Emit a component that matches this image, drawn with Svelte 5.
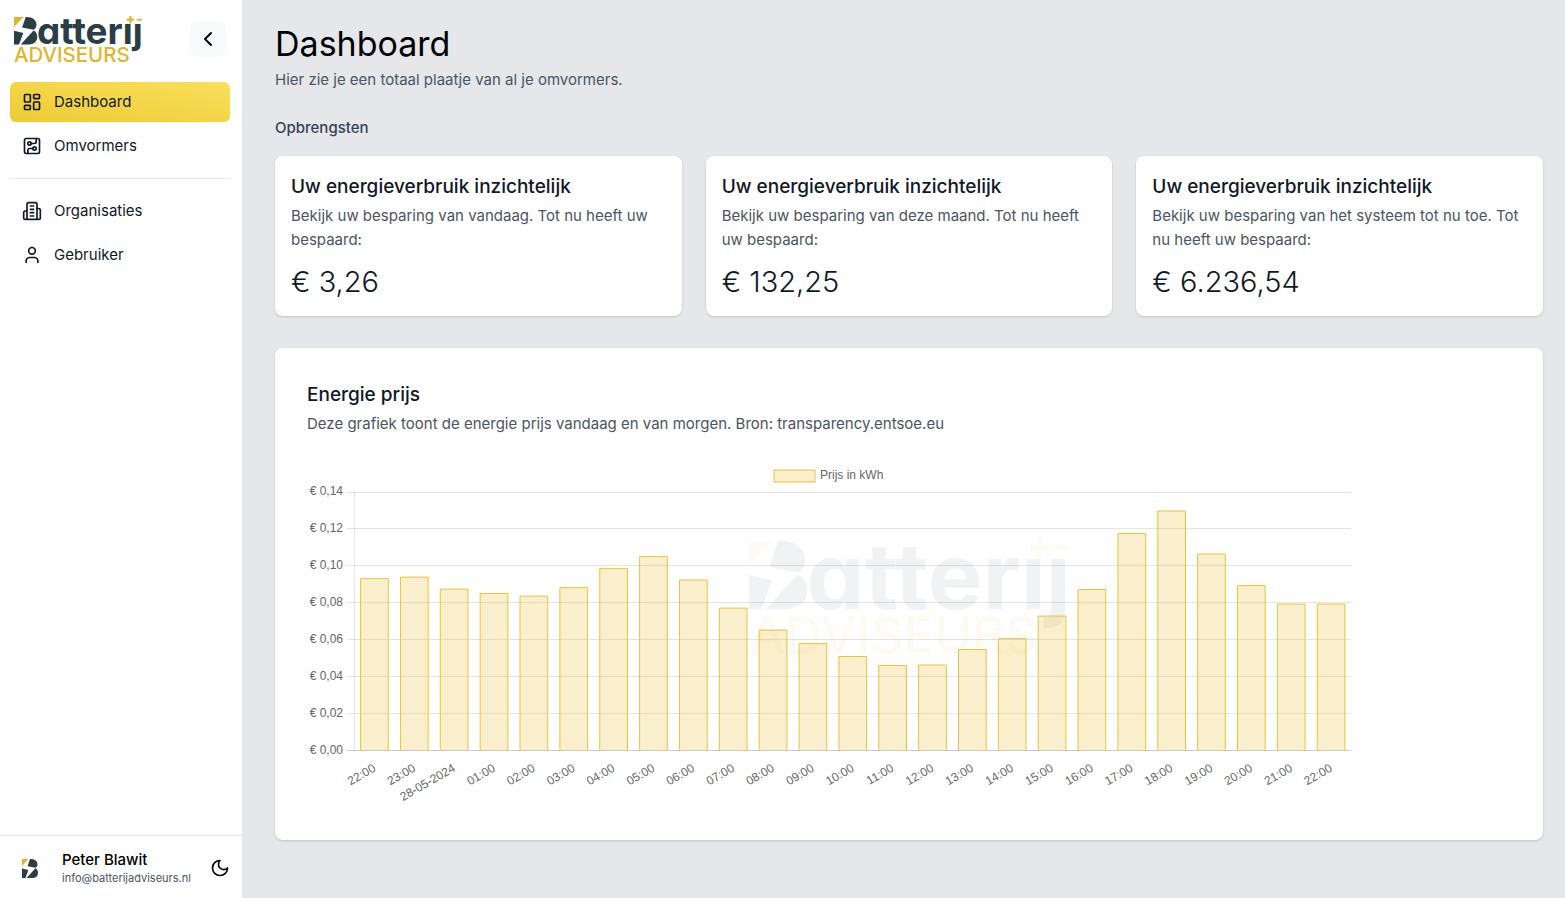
<script>
  const mainLinks = [
    { label: "Dashboard", icon: "dashboard", active: true },
    { label: "Omvormers", icon: "circuit" },
  ];

  const adminLinks = [
    { label: "Organisaties", icon: "building" },
    { label: "Gebruiker", icon: "user" },
  ];

  const savings = [
    { period: "Bekijk uw besparing van vandaag. Tot nu heeft uw bespaard:", amount: "€ 3,26" },
    { period: "Bekijk uw besparing van deze maand. Tot nu heeft uw bespaard:", amount: "€ 132,25" },
    { period: "Bekijk uw besparing van het systeem tot nu toe. Tot nu heeft uw bespaard:", amount: "€ 6.236,54" },
  ];

  const prices = [
    ["22:00", 0.0931], ["23:00", 0.0939], ["28-05-2024", 0.0874], ["01:00", 0.085],
    ["02:00", 0.0836], ["03:00", 0.0882], ["04:00", 0.0985], ["05:00", 0.105],
    ["06:00", 0.0923], ["07:00", 0.0771], ["08:00", 0.0652], ["09:00", 0.0579],
    ["10:00", 0.0509], ["11:00", 0.046], ["12:00", 0.0463], ["13:00", 0.0547],
    ["14:00", 0.0606], ["15:00", 0.0728], ["16:00", 0.0872], ["17:00", 0.1175],
    ["18:00", 0.1297], ["19:00", 0.1064], ["20:00", 0.0893], ["21:00", 0.0793],
    ["22:00", 0.0793],
  ];

  // Plot area inside the chart's viewBox
  const plot = { left: 47.5, right: 1044, top: 32, bottom: 290.5 };
  const maxPrice = 0.14;
  const slot = (plot.right - plot.left) / prices.length;
  const barWidth = slot * 0.72 - 1;

  const ticks = [0, 0.02, 0.04, 0.06, 0.08, 0.1, 0.12, 0.14].map((value) => ({
    label: "€ " + value.toFixed(2).replace(".", ","),
    y: Math.floor(yFor(value)) + 0.5,
    textY: Math.round(yFor(value)) + 3,
  }));

  const bars = prices.map(([time, value], i) => ({
    time,
    center: plot.left + slot * (i + 0.5),
    y: yFor(value),
  }));

  let collapsed = false;

  function yFor(value) {
    return plot.bottom - (value / maxPrice) * (plot.bottom - plot.top);
  }

  function barPath(bar) {
    const x = bar.center - barWidth / 2;
    return `M${x} ${plot.bottom}V${bar.y}h${barWidth}V${plot.bottom}`;
  }
</script>

{#snippet mark()}
  <path class="brand-yellow" d="M93 255H163L93 329Z" />
  <path class="brand-dark" d="M180 255C232 253 260 279 260 313C260 330 252 343 240 350L153 333Z" />
  <path class="brand-dark" d="M93 357L162 373L130 459H93Z" />
  <path class="brand-dark" d="M238 355C256 364 266 382 266 402C266 438 240 459 203 459H143Z" />
{/snippet}

{#snippet logo()}
  <svg class="logo" viewBox="93 247 952 345" role="img" aria-label="Batterij Adviseurs">
    {@render mark()}
    <text class="brand-dark logo-name" x="264" y="459">atterıȷ</text>
    <path class="brand-yellow" d="M951 247h16v19h19v16h-19v20h-16v-20h-19v-16h19zM1008 267h36v15h-36z" />
    <text class="brand-yellow logo-sub" x="93" y="588">ADVISEURS</text>
  </svg>
{/snippet}

{#snippet icon(name)}
  <svg class="icon" viewBox="0 0 24 24" aria-hidden="true">
    {#if name === "dashboard"}
      <rect x="3" y="3" width="7" height="9" rx="1" />
      <rect x="14" y="3" width="7" height="5" rx="1" />
      <rect x="14" y="12" width="7" height="9" rx="1" />
      <rect x="3" y="16" width="7" height="5" rx="1" />
    {:else if name === "circuit"}
      <rect x="3" y="3" width="18" height="18" rx="2" />
      <path d="M11 9h4a2 2 0 0 0 2-2V3" />
      <circle cx="9" cy="9" r="2" />
      <path d="M7 21v-4a2 2 0 0 1 2-2h4" />
      <circle cx="15" cy="15" r="2" />
    {:else if name === "building"}
      <path d="M6 22V4a2 2 0 0 1 2-2h8a2 2 0 0 1 2 2v18Z" />
      <path d="M6 12H4a2 2 0 0 0-2 2v6a2 2 0 0 0 2 2h2" />
      <path d="M18 9h2a2 2 0 0 1 2 2v9a2 2 0 0 1-2 2h-2" />
      <path d="M10 6h4M10 10h4M10 14h4M10 18h4" />
    {:else if name === "user"}
      <path d="M19 21v-2a4 4 0 0 0-4-4H9a4 4 0 0 0-4 4v2" />
      <circle cx="12" cy="7" r="4" />
    {:else if name === "moon"}
      <path d="M12 3a6 6 0 0 0 9 9 9 9 0 1 1-9-9Z" />
    {:else if name === "chevron"}
      <path d="m15 18-6-6 6-6" />
    {/if}
  </svg>
{/snippet}

{#snippet navList(links)}
  <ul class="nav-list">
    {#each links as link (link.label)}
      <li>
        <a
          class="nav-link"
          class:nav-link--active={link.active}
          href="#{link.label.toLowerCase()}"
          aria-current={link.active ? "page" : undefined}
        >
          {@render icon(link.icon)}
          {#if !collapsed}<span>{link.label}</span>{/if}
        </a>
      </li>
    {/each}
  </ul>
{/snippet}

<div class="layout">
  <aside class="sidebar" class:sidebar--collapsed={collapsed}>
    <div class="sidebar__top">
      {#if !collapsed}
        <a class="brand" href="#dashboard">{@render logo()}</a>
      {/if}
      <button type="button" class="toggle" aria-label="Menu inklappen" on:click={() => (collapsed = !collapsed)}>
        {@render icon("chevron")}
      </button>
    </div>

    <nav class="nav">
      {@render navList(mainLinks)}
      <hr />
      {@render navList(adminLinks)}
    </nav>

    <footer class="account">
      <svg class="account__mark" viewBox="93 255 173 204" aria-hidden="true">{@render mark()}</svg>
      {#if !collapsed}
        <div class="account__text">
          <strong>Peter Blawit</strong>
          <span>info@batterijadviseurs.nl</span>
        </div>
        <button type="button" class="theme" aria-label="Donkere modus">
          {@render icon("moon")}
        </button>
      {/if}
    </footer>
  </aside>

  <main class="content">
    <header>
      <h1>Dashboard</h1>
      <p class="lead">Hier zie je een totaal plaatje van al je omvormers.</p>
    </header>

    <h2 class="section-title">Opbrengsten</h2>
    <div class="savings">
      {#each savings as item (item.amount)}
        <section class="card">
          <h3>Uw energieverbruik inzichtelijk</h3>
          <p>{item.period}</p>
          <div class="amount">{item.amount}</div>
        </section>
      {/each}
    </div>

    <section class="card card--chart">
      <h3>Energie prijs</h3>
      <p>Deze grafiek toont de energie prijs vandaag en van morgen. Bron: transparency.entsoe.eu</p>

      <div class="chart-area">
        <div class="watermark" aria-hidden="true">{@render logo()}</div>
        <svg class="chart" viewBox="0 0 1044 348" role="img" aria-label="Prijs in kWh">
          <rect class="bar-fill" x="467" y="10" width="41" height="12" />
          <rect class="bar-line" x="467" y="10" width="41" height="12" />
          <text x="513" y="19">Prijs in kWh</text>

          {#each ticks as tick (tick.label)}
            <line class="grid" class:grid--zero={tick.y > 290} x1="40" x2={plot.right} y1={tick.y} y2={tick.y} />
            <text x="36" y={tick.textY} text-anchor="end">{tick.label}</text>
          {/each}
          <line class="grid" x1={plot.left} x2={plot.left} y1={plot.top} y2={plot.bottom} />

          {#each bars as bar}
            <path class="bar-fill" d={barPath(bar)} />
            <path class="bar-line" d={barPath(bar)} />
            <text text-anchor="end" transform="translate({bar.center + 2} {plot.bottom + 20}) rotate(-30)">{bar.time}</text>
          {/each}
        </svg>
      </div>
    </section>
  </main>
</div>

<style>
  :global(body) {
    margin: 0;
    background: #e5e7eb;
    font-family: Inter, "Open Sans", sans-serif;
    font-size: 15px;
    line-height: 24px;
    color: #111827;
  }

  h1,
  h2,
  h3,
  p {
    margin: 0;
  }

  .layout {
    display: flex;
    min-height: 100vh;
  }

  .icon {
    width: 20px;
    height: 20px;
    flex: none;
    fill: none;
    stroke: currentColor;
    stroke-width: 2;
    stroke-linecap: round;
    stroke-linejoin: round;
  }

  .brand-dark {
    fill: #2b3d45;
  }

  .brand-yellow {
    fill: #e0b52e;
  }

  .logo {
    display: block;
    width: 100%;
    overflow: visible;
  }

  .logo-name {
    font-size: 274px;
    font-weight: 700;
    font-feature-settings: "cv11";
  }

  .logo-sub {
    font-size: 152px;
    font-weight: 500;
  }

  /* Sidebar */
  .sidebar {
    position: sticky;
    top: 0;
    display: flex;
    flex-direction: column;
    flex: none;
    box-sizing: border-box;
    width: 242px;
    height: 100vh;
    background: #fff;
  }

  .sidebar--collapsed {
    width: 64px;
  }

  .sidebar__top {
    display: flex;
    align-items: center;
    justify-content: space-between;
    height: 46px;
    padding: 16px 16px 20px 14px;
  }

  .brand {
    width: 128px;
  }

  .toggle,
  .theme {
    display: flex;
    align-items: center;
    justify-content: center;
    padding: 0;
    border: none;
    background: none;
    color: #000;
    cursor: pointer;
  }

  .toggle {
    width: 36px;
    height: 36px;
    border-radius: 8px;
    background: #f9fafb;
  }

  .toggle .icon {
    width: 24px;
    height: 24px;
  }

  .nav {
    flex: 1;
    padding: 0 12px 0 10px;
  }

  .nav hr {
    margin: 12px 0;
    border: none;
    border-top: 1px solid #e5e7eb;
  }

  .nav-list {
    display: flex;
    flex-direction: column;
    gap: 4px;
    margin: 0;
    padding: 0;
    list-style: none;
  }

  .nav-link {
    display: flex;
    align-items: center;
    gap: 12px;
    padding: 8px 12px;
    border-radius: 6px;
    color: #111827;
    text-decoration: none;
  }

  .nav-link:hover {
    background: #f3f4f6;
  }

  .nav-link--active,
  .nav-link--active:hover {
    background: linear-gradient(to top right, #eecb35, #f8e05a);
  }

  .account {
    display: flex;
    align-items: center;
    padding: 14px 12px 12px 22px;
    border-top: 1px solid #e5e7eb;
  }

  .account__mark {
    width: 16px;
    height: 19px;
    margin-right: 24px;
  }

  .account__text {
    display: flex;
    flex: 1;
    flex-direction: column;
    line-height: 16px;
  }

  .account__text strong {
    font-weight: 500;
    line-height: 20px;
    color: #000;
  }

  .account__text span {
    font-size: 11px;
    color: #4b5563;
  }

  /* Main column */
  .content {
    flex: 1;
    min-width: 0;
    padding: 24px 22px 32px 33px;
  }

  h1 {
    font-size: 34px;
    font-weight: 400;
    line-height: 40px;
    color: #000;
  }

  .lead {
    margin-top: 4px;
    color: #4b5563;
  }

  .section-title {
    margin: 24px 0 16px;
    font-size: 15px;
    font-weight: 500;
    color: #374151;
  }

  .savings {
    display: grid;
    grid-template-columns: repeat(3, 1fr);
    gap: 24px;
  }

  .card {
    padding: 16px;
    border-radius: 8px;
    background: #fff;
    box-shadow: 0 1px 3px rgba(0, 0, 0, 0.1), 0 1px 2px rgba(0, 0, 0, 0.06);
  }

  .card h3 {
    margin-bottom: 2px;
    font-size: 19px;
    font-weight: 500;
    line-height: 30px;
  }

  .card p {
    color: #4b5563;
  }

  .amount {
    margin-top: 12px;
    font-size: 29px;
    font-weight: 300;
    line-height: 36px;
  }

  .card--chart {
    margin-top: 32px;
    padding: 32px;
  }

  .chart-area {
    display: grid;
    margin-top: 24px;
  }

  .watermark,
  .chart {
    grid-area: 1 / 1;
  }

  .watermark {
    place-self: center;
    width: 320px;
    padding-bottom: 76px;
    opacity: 0.06;
  }

  .chart {
    width: 100%;
    max-width: 1044px;
    isolation: isolate;
  }

  .chart text {
    font-family: "Liberation Sans", Arial, sans-serif;
    font-size: 12px;
    fill: #666;
  }

  .grid {
    stroke: rgba(0, 0, 0, 0.1);
    stroke-width: 1;
  }

  .grid--zero {
    stroke: rgba(0, 0, 0, 0.2);
  }

  .bar-fill {
    fill: rgba(234, 193, 50, 0.25);
  }

  .bar-line {
    fill: none;
    stroke: #eac33c;
    stroke-width: 1;
  }

  @media (max-width: 1000px) {
    .savings {
      grid-template-columns: 1fr;
    }
  }
</style>
